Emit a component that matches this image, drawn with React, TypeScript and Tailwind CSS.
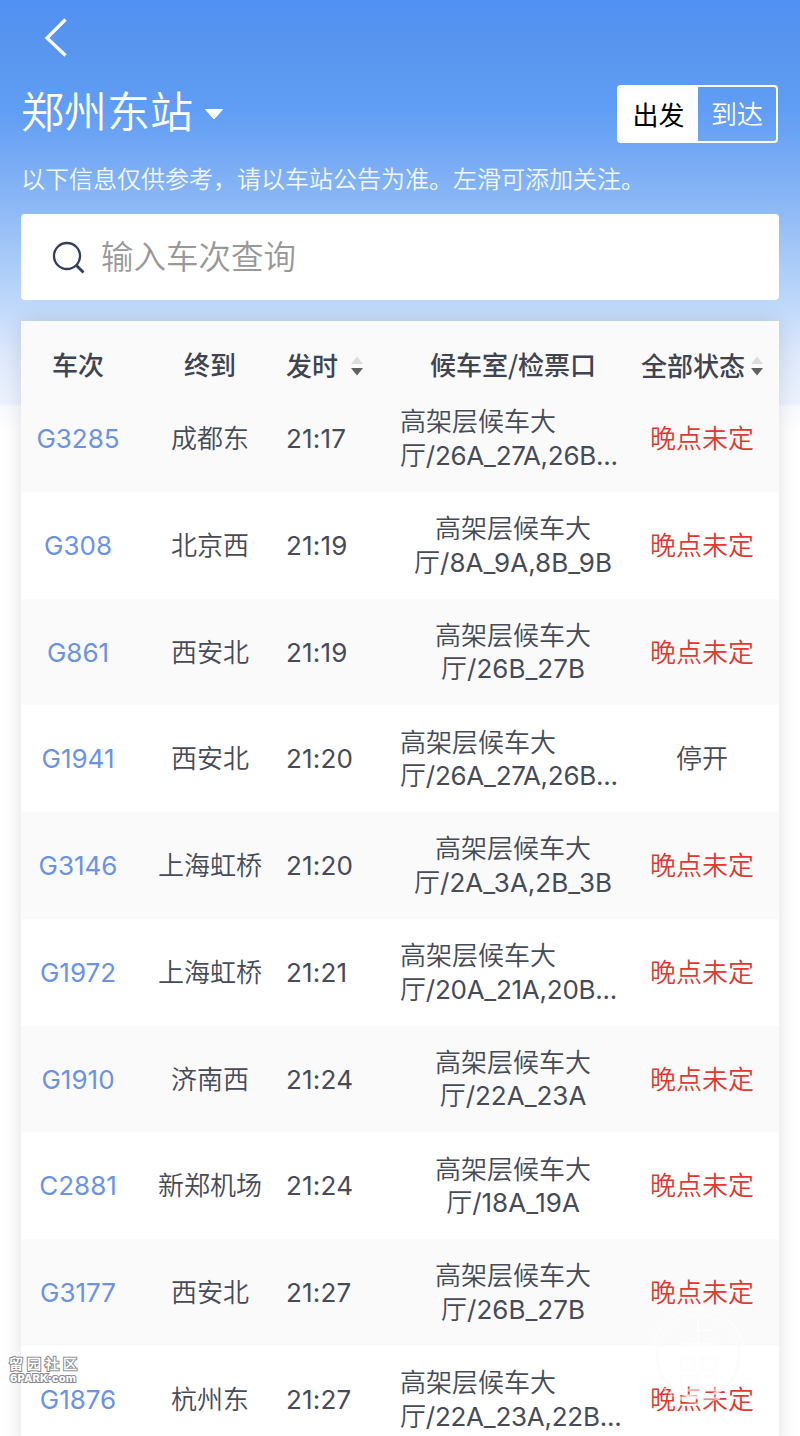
type Train = {
  code: string;
  dest: string;
  time: string;
  gate: string;
  cancelled?: boolean;
};

const trains: Train[] = [
  { code: "G3285", dest: "成都东", time: "21:17", gate: "26A_27A,26B..." },
  { code: "G308", dest: "北京西", time: "21:19", gate: "8A_9A,8B_9B" },
  { code: "G861", dest: "西安北", time: "21:19", gate: "26B_27B" },
  { code: "G1941", dest: "西安北", time: "21:20", gate: "26A_27A,26B...", cancelled: true },
  { code: "G3146", dest: "上海虹桥", time: "21:20", gate: "2A_3A,2B_3B" },
  { code: "G1972", dest: "上海虹桥", time: "21:21", gate: "20A_21A,20B..." },
  { code: "G1910", dest: "济南西", time: "21:24", gate: "22A_23A" },
  { code: "C2881", dest: "新郑机场", time: "21:24", gate: "18A_19A" },
  { code: "G3177", dest: "西安北", time: "21:27", gate: "26B_27B" },
  { code: "G1876", dest: "杭州东", time: "21:27", gate: "22A_23A,22B..." },
];

function SortIcon() {
  return (
    <svg className="mt-[3px] block h-[20px] w-[14px] shrink-0" viewBox="0 0 14 20">
      <path d="M7 0.5L13 8H1Z" fill="#dcdcdc" />
      <path d="M1 12H13L7 19.5Z" fill="#606060" />
    </svg>
  );
}

function TopBar() {
  return (
    <div className="h-[85px] pl-[43px] pt-[16px]">
      <svg className="block h-[44px] w-[28px]" fill="none" viewBox="0 0 28 44">
        <path d="M22.5 3.5L4 22L22.5 39.5" stroke="white" strokeWidth="3.2" />
      </svg>
    </div>
  );
}

function StationRow() {
  return (
    <div className="flex h-[58px] items-start justify-between pl-[21px] pr-[22px]">
      <div className="flex items-center gap-[11px]">
        <p className="h-[54px] whitespace-nowrap text-[43px] leading-[54px] text-white">郑州东站</p>
        <svg className="mt-[5px] block h-[11px] w-[20px]" viewBox="0 0 20 11">
          <path d="M1.5 0.5H18.5L10 10Z" fill="white" stroke="white" strokeLinejoin="round" />
        </svg>
      </div>
      <div className="flex h-[58px] w-[161px] overflow-hidden rounded-[4px] border-2 border-white text-[26px] leading-[56px]">
        <div className="w-[79px] bg-white text-center font-['Noto_Sans_CJK_SC',sans-serif] leading-[53px] text-black">出发</div>
        <div className="flex-1 text-center text-white">到达</div>
      </div>
    </div>
  );
}

function SearchBox() {
  return (
    <div className="mx-[21px] flex h-[86px] items-center rounded-[4px] bg-white pl-[31px]">
      <svg className="block size-[33px] shrink-0" fill="none" viewBox="0 0 33 33">
        <circle cx="15" cy="15" r="13" stroke="#323e58" strokeWidth="2.3" />
        <path d="M24 24L31.5 31.5" stroke="#323e58" strokeWidth="2.8" />
      </svg>
      <p className="ml-[16px] whitespace-nowrap pt-px text-[32.5px] leading-[48px] text-[#999999]">输入车次查询</p>
    </div>
  );
}

function TableHead() {
  return (
    <div className="grid h-[64px] grid-cols-[114px_150px_110px_236px_148px] bg-[#fafafa] pt-[22px] font-['Noto_Sans_CJK_SC',sans-serif] text-[26px] font-medium leading-[41px] text-[#3f4450]">
      <div className="text-center">车次</div>
      <div className="text-center">终到</div>
      <div className="flex items-center gap-[12px] pl-px">
        发时
        <SortIcon />
      </div>
      <div className="text-center">候车室/检票口</div>
      <div className="flex items-center gap-[5px] whitespace-nowrap pl-[10px]">
        全部状态
        <SortIcon />
      </div>
    </div>
  );
}

function TrainRow({ train }: { train: Train }) {
  const clipped = train.gate.endsWith("...");
  return (
    <div className="grid h-[106.75px] shrink-0 grid-cols-[114px_150px_110px_236px_142px] items-center pt-px text-[26px] leading-[33.5px] text-[#464b56] odd:bg-[#fafafa] even:bg-white">
      <div className="text-center text-[#6a92e6]">{train.code}</div>
      <div className="whitespace-nowrap text-center">{train.dest}</div>
      <div className="pl-px tracking-[0.2px]">{train.time}</div>
      <div className={clipped ? "whitespace-nowrap pl-[5px]" : "whitespace-nowrap text-center"}>
        <p>高架层候车大</p>
        <p className={clipped ? "tracking-[-0.25px]" : ""}>厅/{train.gate}</p>
      </div>
      <div className={train.cancelled ? "text-center" : "text-center text-[#e0392f]"}>
        {train.cancelled ? "停开" : "晚点未定"}
      </div>
    </div>
  );
}

function SiteMark() {
  return (
    <div className="absolute left-[9px] top-[1356px] w-[70px] text-white [paint-order:stroke_fill] [-webkit-text-stroke:2px_#8a8a8e]">
      <p className="whitespace-nowrap text-[14px] font-bold leading-[16px] tracking-[4px]">留园社区</p>
      <p className="whitespace-nowrap pl-px text-[11px] font-extrabold leading-[12px] tracking-[0.2px]">6PARK·com</p>
    </div>
  );
}

function SealMark() {
  return (
    <svg className="absolute left-[648px] top-[1306px] h-[100px] w-[100px]" fill="none" viewBox="0 0 100 100">
      <circle cx="50" cy="50" r="47" stroke="white" strokeOpacity="0.5" strokeWidth="1.5" />
      <circle cx="50" cy="50" r="41" stroke="#fbfbfb" strokeOpacity="0.8" strokeWidth="3" />
      <path d="M50 14V38M50 24H62M34 38H66" stroke="white" strokeOpacity="0.5" strokeWidth="2" />
      <path d="M33 52H46V64H33ZM54 52H68V64H54ZM33 70H68V84H33ZM50 64V92M30 92H72" stroke="#fbfbfb" strokeOpacity="0.6" strokeWidth="3" />
    </svg>
  );
}

export default function StationBoard() {
  return (
    <div className="relative h-[1436px] w-[800px] overflow-hidden bg-white bg-[linear-gradient(180deg,#5090f4_0px,#5996ef_50px,#609df4_110px,#73a8f5_150px,#8cb8f5_205px,#bcd7fa_300px,#dce8fc_350px,#edf3fe_404px,#f7faff_406px,#ffffff_430px)] font-['Inter','Noto_Sans_CJK_SC_DemiLight','Noto_Sans_CJK_SC',sans-serif]">
      <TopBar />
      <StationRow />
      <p className="h-[71px] whitespace-nowrap pl-[21px] pt-[19px] text-[24px] leading-[36px] text-white/90">
        以下信息仅供参考，请以车站公告为准。左滑可添加关注。
      </p>
      <SearchBox />
      <div className="mx-[21px] mt-[21px] shadow-[0px_0px_20px_0px_rgba(0,0,0,0.12)]">
        <TableHead />
        <div className="flex flex-col">
          {trains.map((train) => (
            <TrainRow key={train.code} train={train} />
          ))}
        </div>
      </div>
      <SealMark />
      <SiteMark />
    </div>
  );
}
